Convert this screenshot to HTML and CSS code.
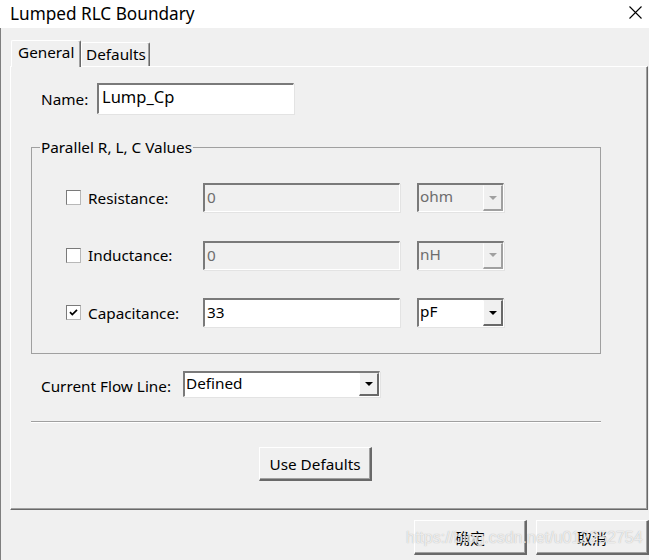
FILE: index.html
```html
<!DOCTYPE html>
<html>
<head>
<meta charset="utf-8">
<link rel="stylesheet" href="styles.css">
</head>
<body>
<div class="titlebar">
  <span class="title">Lumped RLC Boundary</span>
  <svg class="close" width="13" height="13" viewBox="0 0 13 13"><path d="M0.5 0.5 L12.5 12.5 M12.5 0.5 L0.5 12.5" stroke="#000" stroke-width="1.1" fill="none"/></svg>
</div>
<div class="main">
  <div class="tabs">
    <div class="tab active">General</div>
    <div class="tab">Defaults</div>
  </div>
  <div class="panel">
    <div class="name-row">
      <span class="lbl name-lbl">Name:</span>
      <div class="input name-input">Lump_Cp</div>
    </div>
    <fieldset class="group">
      <legend>Parallel R, L, C Values</legend>
      <div class="group-body">
        <div class="param-row">
          <span class="check"></span>
          <span class="lbl param-lbl">Resistance:</span>
          <div class="input param-input disabled">0</div>
          <div class="select unit disabled"><span class="val">ohm</span><span class="drop"><span class="arrow"></span></span></div>
        </div>
        <div class="param-row">
          <span class="check"></span>
          <span class="lbl param-lbl">Inductance:</span>
          <div class="input param-input disabled">0</div>
          <div class="select unit disabled"><span class="val">nH</span><span class="drop"><span class="arrow"></span></span></div>
        </div>
        <div class="param-row">
          <span class="check"><svg width="13" height="13" viewBox="0 0 13 13"><path d="M3 6.2 L5.3 8.6 L10 3.8" stroke="#000" stroke-width="1.7" fill="none"/></svg></span>
          <span class="lbl param-lbl">Capacitance:</span>
          <div class="input param-input">33</div>
          <div class="select unit"><span class="val">pF</span><span class="drop"><span class="arrow"></span></span></div>
        </div>
      </div>
    </fieldset>
    <div class="flow-row">
      <span class="lbl flow-lbl">Current Flow Line:</span>
      <div class="select flow-select"><span class="val">Defined</span><span class="drop"><span class="arrow"></span></span></div>
    </div>
    <div class="sep"></div>
    <div class="defaults-row"><div class="btn defaults-btn">Use Defaults</div></div>
  </div>
  <div class="footer">
    <div class="btn footer-btn">确定</div>
    <div class="btn footer-btn">取消</div>
  </div>
  <div class="watermark">https://blog.csdn.net/u012252754</div>
</div>
</body>
</html>
```
FILE: styles.css
```css
* { box-sizing: border-box; }
body {
  margin: 0;
  width: 649px;
  height: 560px;
  overflow: hidden;
  background: #f0f0f0;
  font-family: "Noto Sans", "Noto Sans CJK SC", sans-serif;
  font-size: 15.3px;
  color: #000;
}
.titlebar {
  height: 28px;
  background: #fff;
  display: flex;
  align-items: center;
  justify-content: space-between;
  padding: 0 7px 0 10px;
}
.title { font-size: 17.2px; line-height: 20px; }
.close { margin-top: -3px; }

.main {
  position: relative;
  height: 532px;
  border-left: 1px solid #7f7f7f;
  padding-top: 12px;
}
.tabs {
  display: flex;
  align-items: flex-end;
  margin-left: 10px;
  height: 26px;
  position: relative;
  z-index: 1;
}
.tab {
  height: 24px;
  width: 69px;
  padding-left: 4px;
  line-height: 22px;
  font-size: 15.3px;
  border-top: 1px solid #fff;
  border-left: 1px solid #fff;
  border-right: 1px solid #696969;
  box-shadow: inset -1px 0 #a0a0a0;
  background: #f0f0f0;
  border-radius: 2px 2px 0 0;
}
.tab.active {
  width: 70px;
  height: 27px;
  margin-bottom: -1px;
  padding-left: 6px;
  line-height: 23px;
}
.panel {
  margin-left: 9px;
  width: 638px;
  height: 444px;
  border-top: 1px solid #fff;
  border-left: 1px solid #fff;
  border-right: 1px solid #696969;
  border-bottom: 1px solid #696969;
  box-shadow: inset -1px -1px #a0a0a0;
  padding: 16px 0 0 20px;
}
.lbl { display: inline-block; white-space: nowrap; }

.input {
  background: #fff;
  border-style: solid;
  border-width: 2px 1px 1px 2px;
  border-color: #7a7a7a #fff #fff #7a7a7a;
  box-shadow: 1px 1px 0 #e3e3e3;
  padding: 2px 2px 0 2px;
  line-height: 19px;
  font-size: 15.3px;
}
.input.disabled { background: #f0f0f0; color: #6d6d6d; }

.name-row {
  display: flex;
  align-items: center;
  padding-left: 10px;
  height: 31px;
}
.name-lbl { width: 56px; }
.name-input { width: 197px; height: 31px; font-size: 16.5px; padding-top: 2px; padding-left: 3px; }

.group {
  margin: 23px 0 0 0;
  padding: 0;
  width: 570px;
  min-width: 0;
  border: 1px solid #a0a0a0;
}
.group legend {
  margin-left: 8px;
  padding: 0 1px;
  line-height: 20px;
  font-size: 15.3px;
}
.group-body { padding: 26px 0 26px 34px; }
.param-row {
  display: flex;
  align-items: center;
  height: 29px;
}
.param-row + .param-row { margin-top: 28.5px; }
.check {
  width: 15px;
  height: 15px;
  background: #fff;
  border: 1px solid #8a8a8a;
  border-color: #7a7a7a #b8b8b8 #b8b8b8 #7a7a7a;
  display: flex;
  align-items: center;
  justify-content: center;
  margin-right: 7px;
}
.param-lbl { width: 115px; }
.param-input { width: 197px; height: 29px; padding-top: 3px; }

.select {
  display: flex;
  background: #fff;
  border-style: solid;
  border-width: 2px 1px 1px 2px;
  border-color: #7a7a7a #fff #fff #7a7a7a;
  box-shadow: 1px 1px 0 #e3e3e3;
}
.select .val {
  flex: 1;
  padding: 2px 0 0 1px;
  line-height: 19px;
  font-size: 15.3px;
}
.select .drop {
  width: 20px;
  background: #f0f0f0;
  border-style: solid;
  border-width: 1px 2px 2px 1px;
  border-color: #f0f0f0 #696969 #696969 #fff;
  display: flex;
  align-items: center;
  justify-content: center;
}
.arrow {
  width: 0; height: 0;
  border-left: 4px solid transparent;
  border-right: 4px solid transparent;
  border-top: 4px solid #000;
}
.select.disabled { background: #f0f0f0; color: #6d6d6d; }
.select.disabled .drop { border-color: #f0f0f0 #a0a0a0 #a0a0a0 #fff; }
.select.disabled .arrow { border-top-color: #a0a0a0; }
.unit { width: 87px; height: 29px; margin-left: 17px; }

.flow-row {
  display: flex;
  align-items: center;
  margin-top: 17px;
  padding-left: 10px;
  height: 26px;
}
.flow-lbl { width: 142px; padding-top: 4px; }
.flow-select { width: 197px; height: 26px; }
.flow-select .val { padding-top: 1px; }

.sep {
  width: 570px;
  margin-top: 24px;
  border-top: 1px solid #a0a0a0;
  border-bottom: 1px solid #fff;
}
.defaults-row { margin-top: 24px; padding-left: 228px; }

.btn {
  display: flex;
  align-items: center;
  justify-content: center;
  background: #f0f0f0;
  border-style: solid;
  border-width: 1px 2px 2px 1px;
  border-color: #fff #696969 #696969 #fff;
  box-shadow: inset -1px -1px #a0a0a0;
  font-size: 15.3px;
}
.defaults-btn { width: 113px; height: 34px; }

.footer {
  display: flex;
  justify-content: flex-end;
  gap: 9px;
  margin-top: 10px;
}
.footer-btn { width: 113px; height: 35px; font-size: 15px; }

.watermark {
  position: absolute;
  left: 405px;
  top: 501px;
  font-family: "Liberation Sans", sans-serif;
  font-size: 16px;
  color: rgba(255, 255, 255, 0.75);
  text-shadow: 0 0 1px rgba(120, 120, 120, 0.6);
  white-space: nowrap;
}
```
